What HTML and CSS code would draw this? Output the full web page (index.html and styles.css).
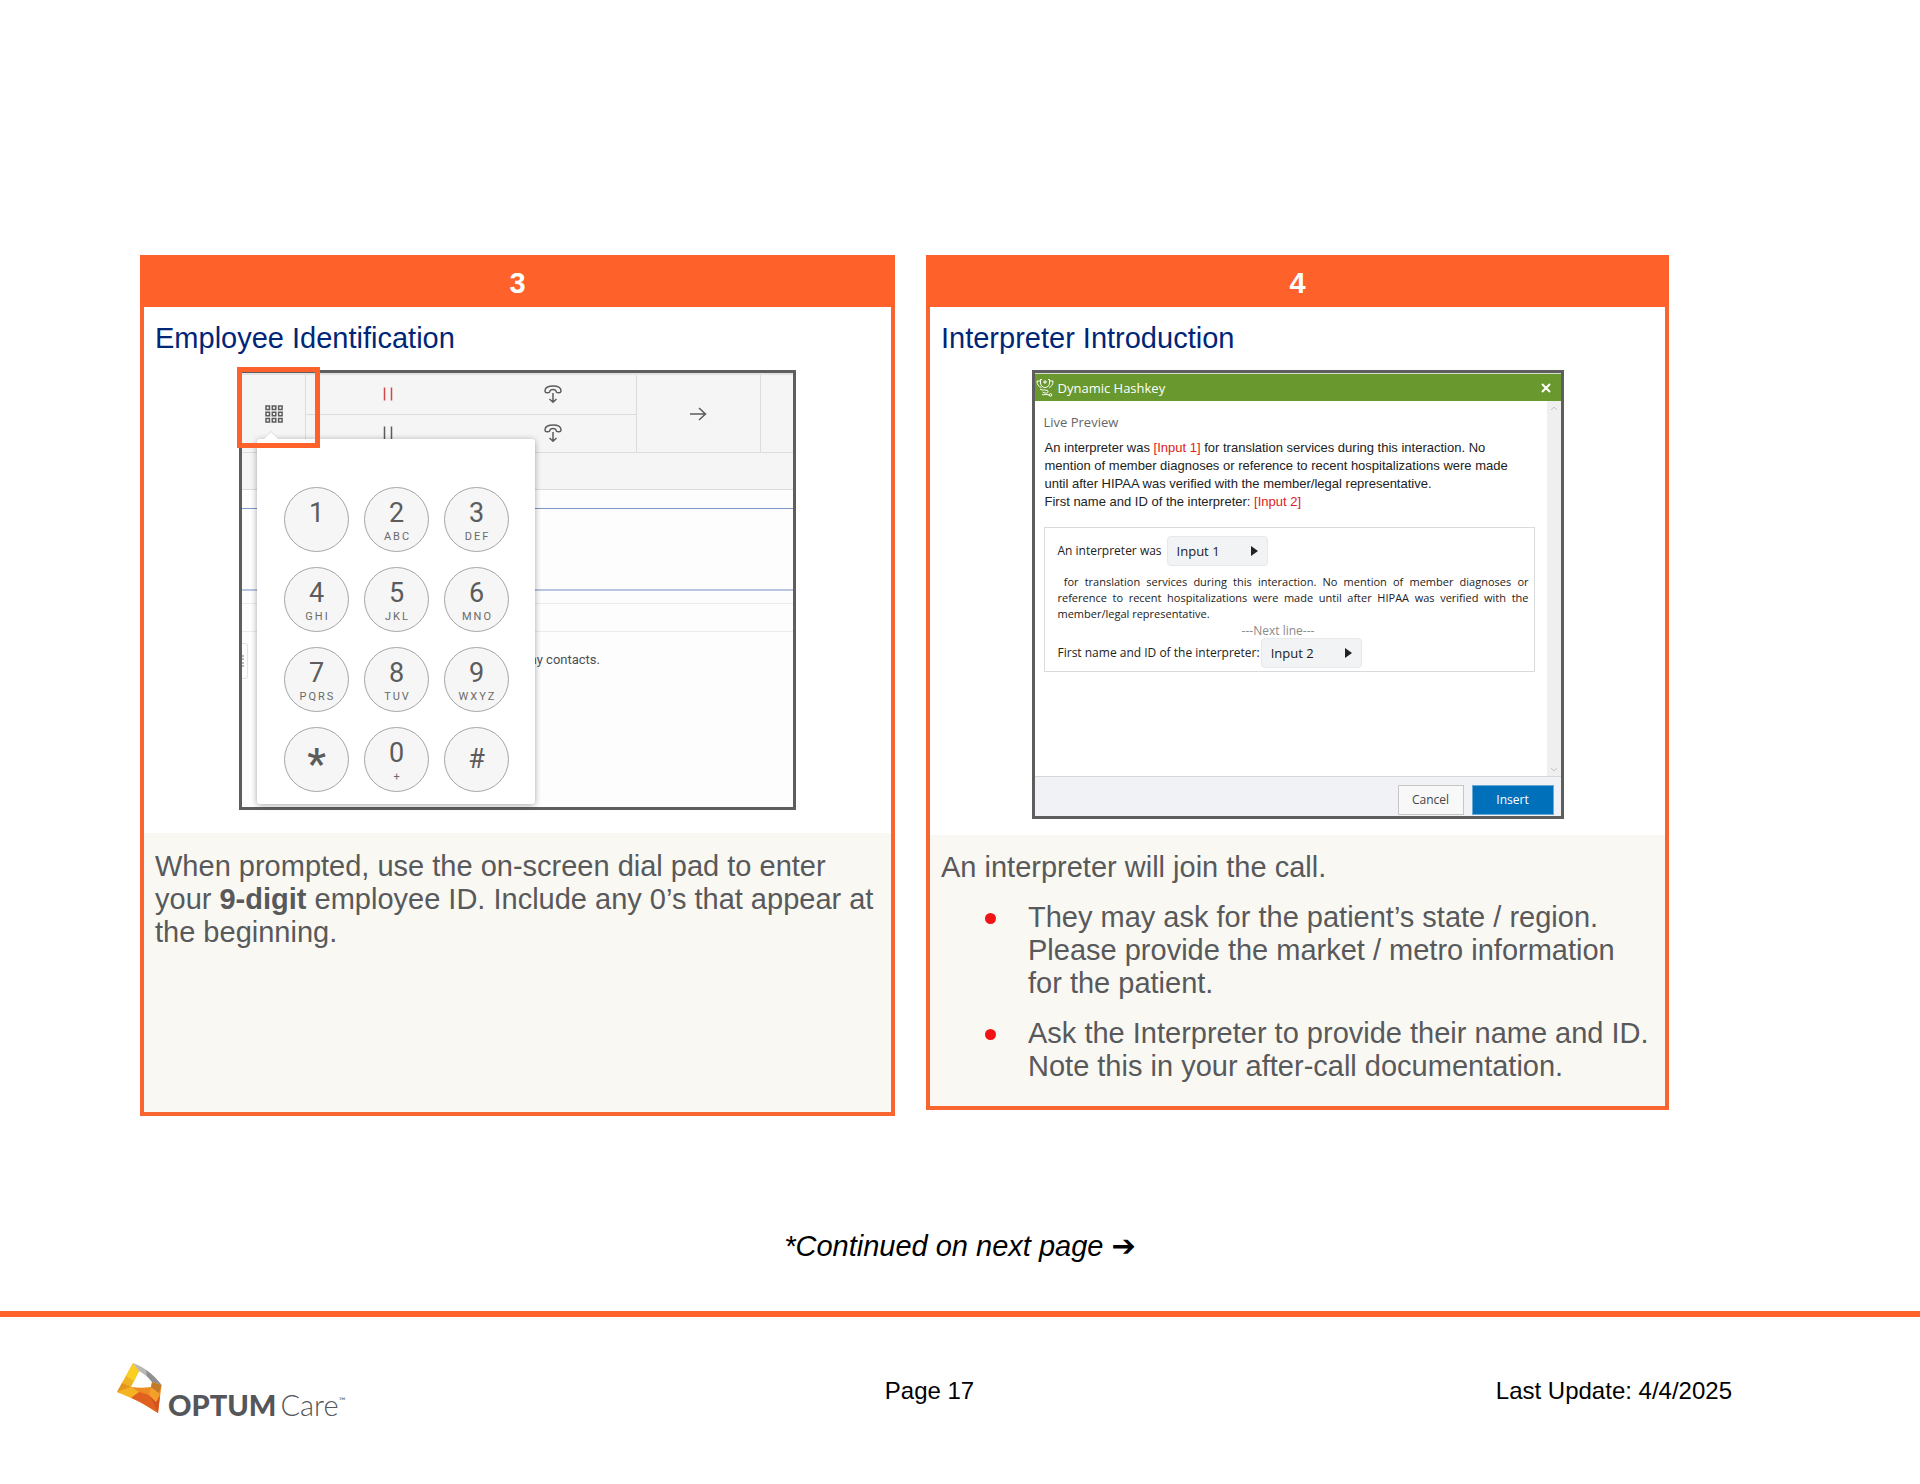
FILE: index.html
```html
<!DOCTYPE html>
<html lang="en">
<head>
<meta charset="utf-8">
<meta name="viewport" content="width=device-width, initial-scale=1">
<title>Interpreter calls - Page 17</title>
<link rel="stylesheet" href="styles.css">
</head>
<body>
<svg class="defs" aria-hidden="true">
  <symbol id="hangup" viewBox="0 0 18 18">
    <path d="M1 5.8C1 2.3 5 .9 9 .9s8 1.400 8 4.900c0 1.700-.9 2.100-2.400 2l-1.300-.2c-1-.2-1.100-.8-1.300-1.600-.3-1.100-1.200-1.600-3-1.600s-2.700.5-3 1.600c-.2.8-.3 1.400-1.300 1.600l-1.300.2C1.900 7.900 1 7.500 1 5.800ZM9 8v9M5.500 14 9 17.200 12.500 14"/>
  </symbol>
</svg>

<main>
  <div class="steps">
    <section class="card">
      <header class="card-number">3</header>
      <h2>Employee Identification</h2>
      <figure class="shot phone">
        <div class="toolbar">
          <button class="cell keypad-toggle" aria-label="Keypad">
            <svg width="18" height="18" viewBox="0 0 18 18"><path d="M1 1h3.500v3.500H1zM7.300 1h3.500v3.500H7.300zM13.600 1h3.500v3.500h-3.500zM1 7.300h3.500v3.500H1zM7.300 7.300h3.500v3.500H7.300zM13.600 7.300h3.500v3.500h-3.500zM1 13.600h3.500v3.500H1zM7.300 13.600h3.500v3.500H7.300zM13.600 13.600h3.500v3.500h-3.500z"/></svg>
          </button>
          <div class="lines">
            <div class="line">
              <button class="cell held" aria-label="Hold line 1"><svg width="10" height="14" viewBox="0 0 10 14"><path d="M1.500 0.500v13M8.500 0.500v13"/></svg></button>
              <button class="cell" aria-label="Hang up line 1"><svg width="18" height="18"><use href="#hangup"/></svg></button>
            </div>
            <div class="line">
              <button class="cell" aria-label="Hold line 2"><svg width="10" height="14" viewBox="0 0 10 14"><path d="M1.500 0.500v13M8.500 0.500v13"/></svg></button>
              <button class="cell" aria-label="Hang up line 2"><svg width="18" height="18"><use href="#hangup"/></svg></button>
            </div>
          </div>
          <button class="cell transfer" aria-label="Transfer"><svg width="18" height="14" viewBox="0 0 18 14"><path d="M1 7h15.500M10 1l6.500 6L10 13"/></svg></button>
          <div class="cell-rest"></div>
        </div>
        <div class="subbar"></div>
        <div class="search-area"></div>
        <div class="list-head"></div>
        <p class="empty">You do not have any contacts.</p>
        <div class="handle"></div>
        <div class="dialpad">
          <button class="key"><b>1</b></button>
          <button class="key"><b>2</b><small>ABC</small></button>
          <button class="key"><b>3</b><small>DEF</small></button>
          <button class="key"><b>4</b><small>GHI</small></button>
          <button class="key"><b>5</b><small>JKL</small></button>
          <button class="key"><b>6</b><small>MNO</small></button>
          <button class="key"><b>7</b><small>PQRS</small></button>
          <button class="key"><b>8</b><small>TUV</small></button>
          <button class="key"><b>9</b><small>WXYZ</small></button>
          <button class="key star"><b>*</b></button>
          <button class="key"><b>0</b><small>+</small></button>
          <button class="key hash"><b>#</b></button>
        </div>
        <div class="highlight"></div>
      </figure>
      <div class="description description-tall">
        <p>When prompted, use the on-screen dial pad to enter your <strong>9-digit</strong> employee ID. Include any 0’s that appear at the beginning.</p>
      </div>
    </section>

    <section class="card">
      <header class="card-number">4</header>
      <h2>Interpreter Introduction</h2>
      <figure class="shot dialog">
        <div class="titlebar">
          <svg width="18" height="19" viewBox="0 0 18 19"><path d="M6 1.500H4.500V5a4.500 4.500 0 0 0 9 0V1.500H12M4.500 3H1c0 4 1.500 5.500 4.500 6.500M13.500 3H17c0 4-1.500 5.500-4 6.500M9 2v4M7 4h4M4 11c2 2 8 0 8 2.500S8 15 6.500 14M6 16.500c2 1 4-1 7 .5"/><circle cx="14.500" cy="17" r="1.300"/></svg>
          <span>Dynamic Hashkey</span>
          <button class="close" aria-label="Close"><svg width="10" height="10" viewBox="0 0 10 10"><path d="M1 1l8 8M9 1l-8 8"/></svg></button>
        </div>
        <div class="dialog-main">
          <div class="dialog-content">
            <h3>Live Preview</h3>
            <p class="preview">An interpreter was <em>[Input 1]</em> for translation services during this interaction. No<br>mention of member diagnoses or reference to recent hospitalizations were made<br>until after HIPAA was verified with the member/legal representative.<br>First name and ID of the interpreter: <em>[Input 2]</em></p>
            <div class="template">
              <div class="field"><span>An interpreter was</span><button class="input-menu">Input 1<i></i></button></div>
              <p>&nbsp;for translation services during this interaction. No mention of member diagnoses or reference to recent hospitalizations were made until after HIPAA was verified with the member/legal representative.</p>
              <div class="next-line">---Next line---</div>
              <div class="field field-last"><span>First name and ID of the interpreter:</span><button class="input-menu">Input 2<i></i></button></div>
            </div>
          </div>
          <div class="scrollbar">
            <svg width="8" height="5" viewBox="0 0 8 5"><path d="M1 4l3-3 3 3"/></svg>
            <svg width="8" height="5" viewBox="0 0 8 5"><path d="M1 1l3 3 3-3"/></svg>
          </div>
        </div>
        <div class="dialog-footer">
          <button class="cancel">Cancel</button>
          <button class="insert">Insert</button>
        </div>
      </figure>
      <div class="description">
        <p>An interpreter will join the call.</p>
        <ul>
          <li>They may ask for the patient’s state / region. Please provide the market / metro information for the patient.</li>
          <li>Ask the Interpreter to provide their name and ID. Note this in your after-call documentation.</li>
        </ul>
      </div>
    </section>
  </div>
  <p class="continued">*Continued on next page <span>➔</span></p>
</main>

<footer class="page-footer">
  <div class="logo">
    <svg width="46" height="52" viewBox="0 0 46 52">
      <path fill="#f0b323" d="M16 0 0 29l14-5 8-16z"/>
      <path fill="#f8cf22" d="M16 0 9 13l8 5 5-10z"/>
      <path fill="#e2951f" d="m5 20 9 4-14 5z"/>
      <path fill="#b9b8b7" d="M16 0c11 4 20 11 28.500 22L35 19C31 14 27 11 22 8z"/>
      <path fill="#8f8f90" d="M29 7c6 4 11 9 15.500 15L35 19l-5-6z"/>
      <path fill="#ee8a22" d="M0 29l14-5c7 1 13 1 20 0l1-5 9.500 3L41 50C28 42 15 33 0 29z"/>
      <path fill="#f5b324" d="M0 29l14-5 8 5-8 6z"/>
      <path fill="#e0601f" d="m14 35 8-6 10 3 9 18C32 44 24 39 14 35z"/>
      <path fill="#f2a02a" d="m32 32 2-8 8 6-3 12z"/>
      <path fill="#c07a2a" d="m35 19 9.500 3L42 30l-8-6z"/>
      <path fill="#d4521f" d="m32 32 9 18 2-17-4 6z"/>
    </svg>
    <span class="logo-name"><b>OPTUM</b><span>Care</span><sup>™</sup></span>
  </div>
  <div class="page-number">Page 17</div>
  <div class="updated">Last Update: 4/4/2025</div>
</footer>
</body>
</html>
```
FILE: styles.css
```css
* { box-sizing: border-box; }

body {
  margin: 0;
  background: #fff;
  color: #000;
  font-family: "Liberation Sans", Arial, sans-serif;
  font-size: 29px;
  line-height: 33px;
}

h2, h3, p, ul, figure { margin: 0; padding: 0; }
button { margin: 0; padding: 0; border: 0; background: none; font: inherit; color: inherit; }
svg { display: block; fill: none; stroke-width: 1.5; }
.defs { position: absolute; width: 0; height: 0; }

main { padding-top: 255px; }

.steps {
  display: grid;
  grid-template-columns: 755fr 743fr;
  gap: 31px;
  align-items: start;
  padding: 0 251px 0 140px;
}

.card { border: 4px solid #f96530; border-top: 0; }
.card-number {
  margin: 0 -4px;
  padding: 12px 0 7px;
  background: #ff612b;
  color: #fff;
  font-weight: bold;
  text-align: center;
}
.card h2 {
  padding: 15px 11px;
  color: #002677;
  font-size: 29px;
  font-weight: normal;
}

.shot { margin: 0 auto; border: 3px solid #5e5e5e; position: relative; }

/* phone toolbar and dial pad */
.phone {
  width: 557px;
  height: 440px;
  margin-bottom: 23px;
  background: #fdfdfd;
  font-family: Roboto, sans-serif;
}
.phone svg { stroke: #5c5c5c; }
.toolbar {
  display: grid;
  grid-template-columns: 64px 331px 124px 1fr;
  height: 80px;
  border-top: 2px solid #e2e2e2;
  border-bottom: 1px solid #dcdcdc;
  background: #f5f5f5;
}
.cell { display: flex; align-items: center; justify-content: center; }
.keypad-toggle, .lines, .transfer { border-right: 1px solid #dcdcdc; }
.lines { display: grid; grid-template-rows: 1fr 1fr; }
.line { display: grid; grid-template-columns: 1fr 1fr; }
.line .cell, .transfer { padding-right: 2px; }
.line + .line { border-top: 1px solid #dcdcdc; }
.phone .held svg { stroke: #cf4a46; }
.subbar { height: 37px; border-bottom: 1px solid #dcdcdc; background: #f5f5f5; }
.search-area { height: 83px; margin-top: 18px; border-top: 1px solid #7b98c8; border-bottom: 2px solid #b8c6e2; }
.list-head { height: 29px; margin-top: 12px; border-top: 1px solid #e9ebee; border-bottom: 1px solid #e9ebee; }
.empty { width: 358px; padding-top: 18px; color: #4a4f57; font-size: 13px; line-height: 20px; text-align: right; }
.handle {
  position: absolute;
  left: 0;
  top: 270px;
  width: 6px;
  height: 36px;
  border: 1px solid #e3e3e3;
  border-left: 0;
  border-radius: 0 3px 3px 0;
}
.handle::before { content: ""; display: block; height: 12px; margin-top: 11px; border-left: 2px dotted #bbb; }
.dialpad {
  position: absolute;
  left: 15px;
  top: 66px;
  display: grid;
  grid-template-columns: repeat(3, 65px);
  gap: 15px;
  width: 278px;
  padding: 48px 27px 12px;
  border-radius: 3px;
  background: #fff;
  box-shadow: 0 1px 6px rgba(0, 0, 0, .35);
}
.dialpad::before {
  content: "";
  position: absolute;
  left: 7px;
  top: -7px;
  border: 7px solid transparent;
  border-top: 0;
  border-bottom-color: #fff;
  filter: drop-shadow(0 -1px 0 #d8d8d8);
}
.key {
  display: flex;
  flex-direction: column;
  align-items: center;
  justify-content: flex-start;
  height: 65px;
  padding-top: 9px;
  border: 1px solid #a6a6a6;
  border-radius: 50%;
  background: #f6f6f6;
  color: #5c5c5c;
}
.key b { font-size: 27px; font-weight: normal; line-height: 32px; }
.key small { padding-left: 2px; color: #6a6a6a; font-size: 11px; line-height: 15px; letter-spacing: 2px; }
.hash { padding-top: 15px; }
.star { padding-top: 10px; }
.star b { font-size: 42px; font-weight: 500; line-height: 52px; }
.highlight {
  position: absolute;
  left: -5px;
  top: -6px;
  width: 83px;
  height: 81px;
  border: 5px solid #ff612b;
}

/* text template dialog */
.dialog {
  width: 532px;
  margin-bottom: 16px;
  background: #fff;
  color: #222;
  font-family: "Open Sans", "Noto Sans", sans-serif;
  font-size: 12px;
  line-height: 16px;
}
.titlebar {
  display: flex;
  align-items: center;
  gap: 4px;
  height: 28px;
  padding: 0 10px 0 1px;
  border-top: 1px solid #d5dccb;
  background: #68982e;
  color: #fff;
  font-size: 13px;
}
.titlebar svg { stroke: #fff; stroke-width: 1; }
.titlebar .close { margin-left: auto; }
.titlebar .close svg { stroke-width: 2; }
.dialog-main { display: flex; height: 375px; }
.dialog-content { flex: 1; padding: 12px 12px 0 9px; }
.dialog h3 { color: #666; font-size: 13px; font-weight: 500; line-height: 18px; }
.preview { padding: 8px 0 0 1px; font-family: "Liberation Sans", Arial, sans-serif; font-size: 13px; line-height: 18px; white-space: nowrap; }
.preview em { color: #e02020; font-style: normal; }
.template {
  height: 145px;
  margin-top: 16px;
  padding: 8px 5px 0 13px;
  border: 1px solid #dadada;
}
.template p { padding-top: 8px; font-size: 11px; text-align: justify; }
.field { display: flex; align-items: center; gap: 5px; }
.field-last { gap: 1px; }
.next-line { margin-top: 1px; padding-right: 30px; color: #8a8a8a; line-height: 15px; text-align: center; }
.input-menu {
  display: flex;
  align-items: center;
  justify-content: space-between;
  width: 101px;
  height: 30px;
  padding: 0 9px;
  border: 1px solid #e6e8ea;
  border-radius: 4px;
  background: #f2f3f5;
  font-size: 13px;
}
.input-menu i { border: 5px solid transparent; border-left: 7px solid #222; border-right: 0; }
.scrollbar {
  display: flex;
  flex-direction: column;
  align-items: center;
  justify-content: space-between;
  width: 14px;
  padding: 5px 0 4px;
  background: #efefef;
}
.scrollbar svg { stroke: #c4c4c4; stroke-width: 1; }
.dialog-footer {
  display: flex;
  justify-content: flex-end;
  gap: 8px;
  padding: 8px 7px 1px;
  border-top: 1px solid #d4d6d8;
  background: #f1f2f5;
}
.dialog-footer button { height: 30px; border: 1px solid #c6c6c6; }
.dialog-footer .cancel { width: 66px; background: #f8f8f8; color: #444; }
.dialog-footer .insert { width: 82px; border-color: #6aa9d6; background: #0070bb; color: #fff; }

/* instructions below each picture */
.description { padding: 16px 11px 23px; background: #f9f8f3; color: #58595b; }
.description-tall { min-height: 279px; padding-top: 17px; }
.description ul { list-style: none; }
.description li { position: relative; margin-top: 17px; padding-left: 87px; }
.description li::before {
  content: "";
  position: absolute;
  left: 44px;
  top: 12px;
  width: 11px;
  height: 11px;
  border-radius: 50%;
  background: #f01414;
}

.continued { padding: 114px 0 48px; font-style: italic; text-align: center; }
.continued span { font-family: "DejaVu Sans", sans-serif; font-style: normal; }

.page-footer {
  display: grid;
  grid-template-columns: 1fr auto 1fr;
  align-items: center;
  padding: 46px 188px 66px 117px;
  border-top: 6px solid #ff612b;
  font-size: 24px;
  line-height: 28px;
}
.logo { display: flex; gap: 5px; color: #55565a; font-family: Lato, sans-serif; }
.logo-name { padding-top: 28px; font-size: 29px; white-space: nowrap; }
.logo-name b { margin-right: 4px; font-weight: 900; }
.logo-name span { font-weight: 300; }
.logo-name sup { font-size: 9px; line-height: 0; vertical-align: 12px; }
.page-number { padding-left: 10px; }
.updated { text-align: right; }
```
